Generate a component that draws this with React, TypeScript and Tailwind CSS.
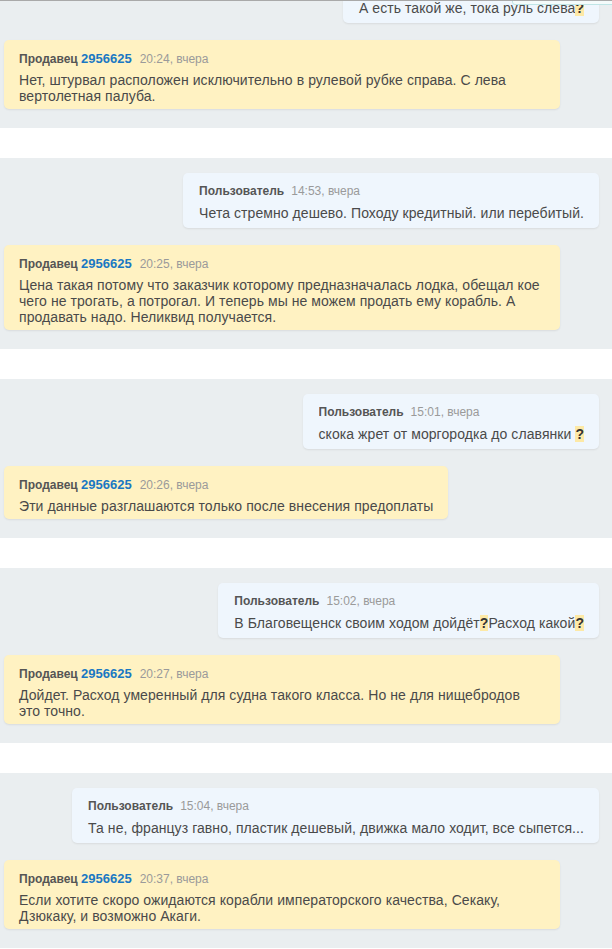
import React from "react";

type Part = string | { q: true };

interface Thread {
  user: { time: string; lines: Part[][] };
  seller: { time: string; lines: string[]; wide: boolean };
  cut?: boolean;
}

const threads: Thread[] = [
  {
    cut: true,
    user: { time: "14:40, вчера", lines: [["А есть такой же, тока руль слева", { q: true }]] },
    seller: {
      time: "20:24, вчера",
      wide: true,
      lines: ["Нет, штурвал расположен исключительно в рулевой рубке справа. С лева", "вертолетная палуба."],
    },
  },
  {
    user: { time: "14:53, вчера", lines: [["Чета стремно дешево. Походу кредитный. или перебитый."]] },
    seller: {
      time: "20:25, вчера",
      wide: true,
      lines: [
        "Цена такая потому что заказчик которому предназначалась лодка, обещал кое",
        "чего не трогать, а потрогал. И теперь мы не можем продать ему корабль. А",
        "продавать надо. Неликвид получается.",
      ],
    },
  },
  {
    user: { time: "15:01, вчера", lines: [["скока жрет от моргородка до славянки ", { q: true }]] },
    seller: {
      time: "20:26, вчера",
      wide: false,
      lines: ["Эти данные разглашаются только после внесения предоплаты"],
    },
  },
  {
    user: {
      time: "15:02, вчера",
      lines: [["В Благовещенск своим ходом дойдёт", { q: true }, "Расход какой", { q: true }]],
    },
    seller: {
      time: "20:27, вчера",
      wide: true,
      lines: ["Дойдет. Расход умеренный для судна такого класса. Но не для нищебродов", "это точно."],
    },
  },
  {
    user: {
      time: "15:04, вчера",
      lines: [["Та не, француз гавно, пластик дешевый, движка мало ходит, все сыпется..."]],
    },
    seller: {
      time: "20:37, вчера",
      wide: true,
      lines: ["Если хотите скоро ожидаются корабли императорского качества, Секаку,", "Дзюкаку, и возможно Акаги."],
    },
  },
];

// highlighted question mark
const Q = () => <span className="bg-[#fde9a6] font-bold text-[#333]">?</span>;

const Block: React.FC<{ t: Thread }> = ({ t }) => (
  <div
    className={
      "bg-[#eaeef0] pl-[4px] pr-[13px] pb-[19px] " +
      (t.cut ? "relative overflow-hidden border-t border-[#a9a9a9]" : "pt-[15px]")
    }
  >
    {t.cut && (
      <div className="absolute right-[-10px] top-[-7px] h-[11px] w-[110px] rounded-[3px] border border-[#bfe5e6] bg-[#f4fbfb]" />
    )}
    <div className={"flex justify-end " + (t.cut ? "-mt-[33px]" : "")}>
      <div className="rounded-[5px] bg-[#eff6fd] pl-[16px] pr-[15px] pt-[11px] pb-[7px] shadow-[0_1px_2px_rgba(0,0,0,0.08)]">
        <div className="h-[15px] overflow-hidden text-[12px] leading-[15px]">
          <span className="font-bold text-[#555]">Пользователь</span>
          <span className="ml-[7px] text-[#9a9a9a]">{t.user.time}</span>
        </div>
        <div className="mt-[6px] text-[14px] leading-[16px] tracking-[0.07px] text-[#4a4a4a]">
          {t.user.lines.map((l, i) => (
            <div key={i}>{l.map((p, j) => (typeof p === "string" ? <span key={j}>{p}</span> : <Q key={j} />))}</div>
          ))}
        </div>
      </div>
    </div>
    <div className="mt-[17px] flex">
      <div
        className={
          "rounded-[5px] bg-[#fff2c2] pl-[15px] pr-[15px] pt-[11px] pb-[5px] shadow-[0_1px_2px_rgba(0,0,0,0.08)] " +
          (t.seller.wide ? "w-[556px]" : "w-fit")
        }
      >
        <div className="h-[15px] overflow-hidden text-[12px] leading-[15px]">
          <span className="font-bold text-[#555]">Продавец</span>{" "}
          <span className="font-bold text-[13px] leading-[15px] text-[#1a78c2]">2956625</span>
          <span className="ml-[8px] text-[#9a9a9a]">{t.seller.time}</span>
        </div>
        <div className="mt-[6px] text-[14px] leading-[16px] tracking-[0.07px] text-[#4a4a4a]">
          {t.seller.lines.map((l, i) => (
            <div key={i}>{l}</div>
          ))}
        </div>
      </div>
    </div>
  </div>
);

export default function App() {
  return (
    <div className="w-[612px] h-[949px] overflow-hidden bg-white font-['Liberation_Sans',Arial,sans-serif]">
      {threads.map((t, i) => (
        <div key={i} className={i > 0 ? "mt-[30px]" : ""}>
          <Block t={t} />
        </div>
      ))}
    </div>
  );
}
